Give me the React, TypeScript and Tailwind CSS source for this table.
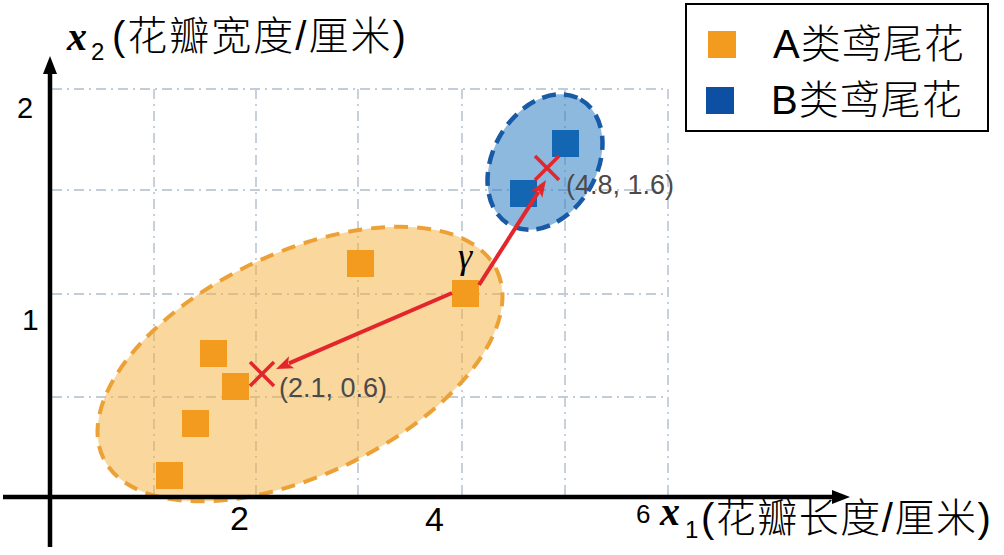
const SANS = "'Liberation Sans', 'Noto Sans CJK SC', sans-serif";
const SERIF = "'Liberation Serif', 'DejaVu Serif', serif";

const GRID_X = [154, 256, 358, 462, 565, 668];
const GRID_Y = [89, 190, 294, 397];

const ORANGE_PTS = [
  [200, 340],
  [222, 373],
  [182, 410],
  [156, 462],
  [347, 250],
  [452, 280],
];
const BLUE_PTS = [
  [552, 130],
  [510, 180],
];

type Pt = [number, number];

// flèche rouge : trait + pointe triangulaire
const Arrow = ({ from, to }: { from: Pt; to: Pt }) => {
  const dx = to[0] - from[0];
  const dy = to[1] - from[1];
  const len = Math.hypot(dx, dy);
  const ux = dx / len;
  const uy = dy / len;
  const bx = to[0] - ux * 17;
  const by = to[1] - uy * 17;
  const px = -uy * 6.5;
  const py = ux * 6.5;
  return (
    <g>
      <line
        x1={from[0]}
        y1={from[1]}
        x2={bx + ux * 3}
        y2={by + uy * 3}
        stroke="#e3262b"
        strokeWidth={4}
      />
      <polygon
        points={`${to[0]},${to[1]} ${bx + px},${by + py} ${bx + ux * 4},${by + uy * 4} ${bx - px},${by - py}`}
        fill="#e3262b"
      />
    </g>
  );
};

const Cross = ({ x, y }: { x: number; y: number }) => (
  <g stroke="#e3262b" strokeWidth={3.5}>
    <line x1={x - 12} y1={y - 12} x2={x + 12} y2={y + 12} />
    <line x1={x - 12} y1={y + 12} x2={x + 12} y2={y - 12} />
  </g>
);

const Chart = () => (
  <svg
    className="absolute inset-0"
    width={1004}
    height={555}
    viewBox="0 0 1004 555"
  >
    {/* grille pointillée */}
    <g stroke="#c3cdd8" strokeWidth={1.8} strokeDasharray="10 5 2 5">
      {GRID_X.map((x) => (
        <line key={x} x1={x} y1={89} x2={x} y2={497} />
      ))}
      {GRID_Y.map((y) => (
        <line key={y} x1={52} y1={y} x2={668} y2={y} />
      ))}
    </g>

    {/* clusters */}
    <ellipse
      cx={300}
      cy={364}
      rx={218}
      ry={111}
      transform="rotate(-25.5 300 364)"
      fill="#f6b03c"
      fillOpacity={0.5}
      stroke="#eca136"
      strokeWidth={4}
      strokeDasharray="14 9"
    />
    <ellipse
      cx={545}
      cy={162}
      rx={72}
      ry={52}
      transform="rotate(-60.5 545 162)"
      fill="#2f7fc4"
      fillOpacity={0.55}
      stroke="#185aa6"
      strokeWidth={4.5}
      strokeDasharray="14 8"
    />

    {/* axes */}
    <g stroke="#000" strokeWidth={4.5}>
      <line x1={50} y1={70} x2={50} y2={547} />
      <line x1={3} y1={497} x2={834} y2={497} />
    </g>
    <polygon points="50,56 43,74 57,74" fill="#000" />
    <polygon points="850,497 832,490 832,504" fill="#000" />

    {/* points */}
    {ORANGE_PTS.map(([x, y]) => (
      <rect key={`${x}-${y}`} x={x} y={y} width={27} height={27} fill="#f29b1e" />
    ))}
    {BLUE_PTS.map(([x, y]) => (
      <rect key={`${x}-${y}`} x={x} y={y} width={27} height={27} fill="#1366b2" />
    ))}

    <Arrow from={[452, 293]} to={[276, 369]} />
    <Arrow from={[479, 285]} to={[546, 180]} />
    <Cross x={262} y={374} />
    <Cross x={547} y={168} />

    {/* annotations */}
    <text x={458} y={268} fontFamily={SERIF} fontStyle="italic" fontSize={36}>
      γ
    </text>
    <text x={279} y={397} fontFamily={SANS} fontSize={27} fill="#4a4a4a">
      (2.1, 0.6)
    </text>
    <text x={566} y={194} fontFamily={SANS} fontSize={27} fill="#4a4a4a">
      (4.8, 1.6)
    </text>

    {/* graduations */}
    <g fontFamily={SANS} fill="#000">
      <text x={17} y={118} fontSize={29}>
        2
      </text>
      <text x={22} y={330} fontSize={30}>
        1
      </text>
      <text x={230} y={530} fontSize={34}>
        2
      </text>
      <text x={425} y={531} fontSize={34}>
        4
      </text>
      <text x={636} y={523} fontSize={26}>
        6
      </text>
    </g>

    {/* titres des axes */}
    <text x={67} y={50} fontFamily={SERIF} fontStyle="italic" fontWeight="bold" fontSize={40}>
      x
    </text>
    <text x={91} y={60} fontFamily={SANS} fontSize={24}>
      2
    </text>
    <text x={112} y={50} fontFamily={SANS} fontWeight={300} fontSize={40} letterSpacing={2}>
      (花瓣宽度/厘米)
    </text>

    <text x={660} y={525} fontFamily={SERIF} fontStyle="italic" fontWeight="bold" fontSize={40}>
      x
    </text>
    <text x={685} y={538} fontFamily={SANS} fontSize={24}>
      1
    </text>
    <text x={701} y={532} fontFamily={SANS} fontWeight={300} fontSize={40} letterSpacing={1.5}>
      (花瓣长度/厘米)
    </text>
  </svg>
);

const LEGEND = [
  { label: "A类鸢尾花", color: "bg-[#f29b1f]", offset: "ml-[21px]" },
  { label: "B类鸢尾花", color: "bg-[#0c4fa3]", offset: "ml-[19px]" },
];

export default function App() {
  return (
    <div className="relative w-[1004px] h-[555px] overflow-hidden bg-white">
      <Chart />
      <div className="absolute left-[685px] top-[3px] w-[304px] h-[129px] border-2 border-black bg-white pt-[11px] flex flex-col font-['Liberation_Sans','Noto_Sans_CJK_SC',sans-serif]">
        {LEGEND.map(({ label, color, offset }) => (
          <div key={label} className="flex items-center h-[56px]">
            <div className={`${offset} w-[28px] h-[27px] shrink-0 ${color}`} />
            <span className="ml-[37px] text-[40px] font-light leading-[56px] text-black tracking-[1px]">
              {label}
            </span>
          </div>
        ))}
      </div>
    </div>
  );
}
